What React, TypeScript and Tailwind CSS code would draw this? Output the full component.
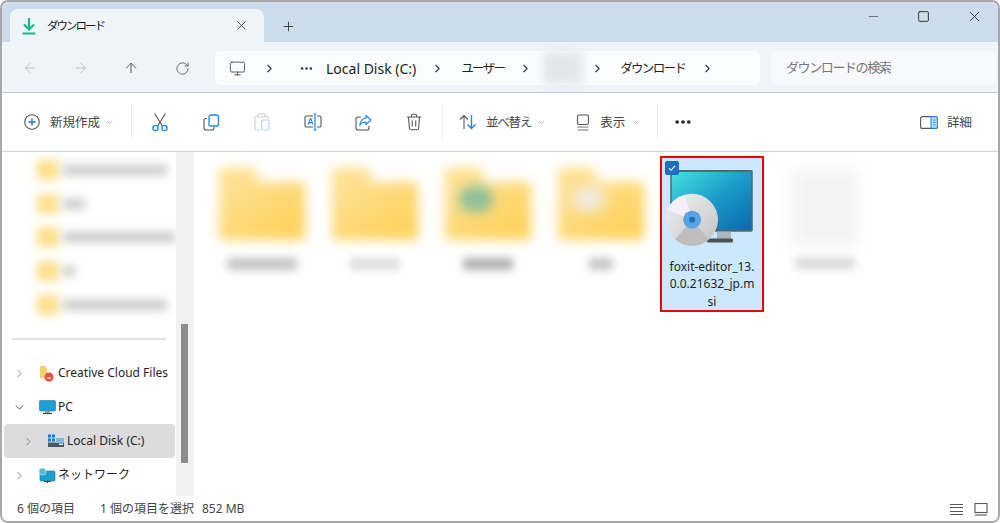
import React from "react";
import { ArrowLeft, ArrowRight, ArrowUp, RotateCw, Monitor, ChevronRight, ChevronDown, X, Plus, Minus, Square, Ellipsis } from "lucide-react";

function DownloadIcon() {
  return (
    <svg width="16" height="18" viewBox="0 0 16 18" fill="none" stroke="#1fb58f" strokeWidth="2.2">
      <path d="M8 1v10.5M3 7.5l5 5 5-5" />
      <path d="M1.5 16.5h13" />
    </svg>
  );
}
function NewIcon() {
  return (
    <svg width="18" height="18" viewBox="0 0 18 18" fill="none">
      <circle cx="9" cy="9" r="7.3" stroke="#555" strokeWidth="1.1" />
      <path d="M9 5.5v7M5.5 9h7" stroke="#1a73c8" strokeWidth="1.3" />
    </svg>
  );
}
function CutIcon() {
  return (
    <svg width="18" height="20" viewBox="0 0 18 20" fill="none">
      <path d="M3.5 1.5 L11.5 14M14.5 1.5 L6.5 14" stroke="#555" strokeWidth="1.1" />
      <circle cx="4.5" cy="16" r="2.6" stroke="#1e88e5" strokeWidth="1.4" />
      <circle cx="13.5" cy="16" r="2.6" stroke="#1e88e5" strokeWidth="1.4" />
    </svg>
  );
}
function CopyIcon() {
  return (
    <svg width="17" height="17" viewBox="0 0 17 17" fill="none">
      <path d="M4 4.5H3a2 2 0 0 0-2 2V14a2 2 0 0 0 2 2h6a2 2 0 0 0 2-2v-1" stroke="#555" strokeWidth="1.1" />
      <rect x="6" y="1" width="9.5" height="11" rx="2" stroke="#1e88e5" strokeWidth="1.3" />
    </svg>
  );
}
function PasteIcon() {
  return (
    <svg width="16" height="18" viewBox="0 0 16 18" fill="none">
      <path d="M4 3H2.5A1.5 1.5 0 0 0 1 4.5v11A1.5 1.5 0 0 0 2.5 17H6M11 3h1.5A1.5 1.5 0 0 1 14 4.5V6" stroke="#cfcfcf" strokeWidth="1.1" />
      <rect x="4" y="1" width="7" height="3" rx="1" stroke="#cfcfcf" strokeWidth="1.1" />
      <rect x="7.5" y="7" width="7.5" height="10" rx="1.5" stroke="#b7d6ee" strokeWidth="1.2" />
    </svg>
  );
}
function RenameIcon() {
  return (
    <svg width="18" height="18" viewBox="0 0 18 18" fill="none">
      <path d="M9 3H2.5A1.5 1.5 0 0 0 1 4.5v8A1.5 1.5 0 0 0 2.5 14H9M13 3h2.5A1.5 1.5 0 0 1 17 4.5v8a1.5 1.5 0 0 1-1.5 1.5H13" stroke="#555" strokeWidth="1.1" />
      <path d="M4 11.5L6.3 5.5h.4L9 11.5M4.8 9.6h3.4" stroke="#1e88e5" strokeWidth="1.1" />
      <path d="M11 1v16M9.5 1h3M9.5 17h3" stroke="#1e88e5" strokeWidth="1.2" />
    </svg>
  );
}
function ShareIcon() {
  return (
    <svg width="17" height="17" viewBox="0 0 17 17" fill="none">
      <path d="M6 3H3a2 2 0 0 0-2 2v9a2 2 0 0 0 2 2h9a2 2 0 0 0 2-2v-2" stroke="#555" strokeWidth="1.1" />
      <path d="M11 1.5L16 6l-5 4.5V8C8 8 6 9 4.8 11.5 5 7.5 7.5 4.5 11 4.2z" stroke="#1e88e5" strokeWidth="1.2" strokeLinejoin="round" />
    </svg>
  );
}
function TrashIcon() {
  return (
    <svg width="16" height="18" viewBox="0 0 16 18" fill="none" stroke="#555" strokeWidth="1.1">
      <path d="M1 4h14M5.5 4V2.6A1.3 1.3 0 0 1 6.8 1.3h2.4a1.3 1.3 0 0 1 1.3 1.3V4" />
      <path d="M2.5 4l.9 11.2A1.6 1.6 0 0 0 5 16.7h6a1.6 1.6 0 0 0 1.6-1.5L13.5 4" />
      <path d="M6.3 7.5v6M9.7 7.5v6" />
    </svg>
  );
}
function SortIcon() {
  return (
    <svg width="18" height="16" viewBox="0 0 18 16" fill="none">
      <path d="M5 15V1.5M1 5.5l4-4 4 4" stroke="#555" strokeWidth="1.1" />
      <path d="M12.5 1v13.5M8.5 10.5l4 4 4-4" stroke="#1e88e5" strokeWidth="1.4" />
    </svg>
  );
}
function ViewIcon() {
  return (
    <svg width="14" height="17" viewBox="0 0 14 17" fill="none" stroke="#555" strokeWidth="1.1">
      <rect x="1.5" y="1" width="11" height="9.5" rx="1.5" />
      <path d="M1.5 13h11M1.5 16h11" stroke="#777" />
    </svg>
  );
}
function DetailsIcon() {
  return (
    <svg width="18" height="13" viewBox="0 0 18 13" fill="none">
      <rect x="0.6" y="0.6" width="16.8" height="11.8" rx="2" stroke="#555" strokeWidth="1.1" />
      <path d="M11 0.6h4.4a2 2 0 0 1 2 2v7.8a2 2 0 0 1-2 2H11z" fill="#bfe0f7" stroke="#1e88e5" strokeWidth="1.1" />
      <path d="M13 4h2.5M13 6.5h2.5M13 9h2.5" stroke="#1e88e5" strokeWidth="0.9" />
    </svg>
  );
}
function MsiIcon() {
  return (
    <svg width="90" height="84" viewBox="0 0 90 84" className="mr-[4px]">
      <defs>
        <linearGradient id="scr" x1="0" y1="0" x2="1" y2="1">
          <stop offset="0" stopColor="#45e0e0" />
          <stop offset="0.5" stopColor="#1b9cc8" />
          <stop offset="1" stopColor="#0a68b0" />
        </linearGradient>
        <linearGradient id="dsk" x1="0" y1="0" x2="1" y2="1">
          <stop offset="0" stopColor="#f0f0f0" />
          <stop offset="1" stopColor="#c4c4c4" />
        </linearGradient>
      </defs>
      <rect x="5" y="1" width="83" height="62" rx="1.5" fill="#55666f" />
      <rect x="6.5" y="3" width="80" height="58" fill="url(#scr)" />
      <rect x="52" y="63" width="14" height="8" fill="#a9b7bf" />
      <rect x="42" y="70" width="26" height="4" rx="1" fill="#4b5258" />
      <circle cx="27" cy="51" r="26" fill="url(#dsk)" />
      <path d="M27 51L2 41a26 26 0 0 1 18-15z" fill="#f3eff4" />
      <path d="M27 51L10 71a26 26 0 0 0 34 0z" fill="#bdbdbd" />
      <circle cx="27" cy="51" r="9" fill="#5aa3e3" />
      <circle cx="27" cy="51" r="3" fill="#1c6fc0" />
    </svg>
  );
}
function FolderBlur({ tint }: { tint?: string }) {
  return (
    <div className="relative w-[86px] h-[72px] blur-[6px]">
      <div className="w-[38px] h-[16px] bg-[#fde08c] rounded-t" />
      <div className="h-[58px] -mt-[2px] rounded bg-gradient-to-br from-[#fde29a] via-[#fdd873] to-[#ffd050]" />
      {tint && <div className={`absolute left-[14px] top-[18px] w-[34px] h-[26px] rounded-full ${tint}`} />}
    </div>
  );
}
function GridItem({ tint, label }: { tint?: string; label: string }) {
  return (
    <div className="w-[104px] h-[156px] pt-[12px] pl-[4px] flex flex-col items-center shrink-0">
      <FolderBlur tint={tint} />
      <div className={`mt-[18px] h-[12px] blur-[4px] ${label}`} />
    </div>
  );
}
function BlurRow({ w }: { w: string }) {
  return (
    <div className="h-[33.7px] flex items-center pl-[35px]">
      <div className="w-[22px] h-[20px] bg-[#fde08c] blur-[5px] shrink-0" />
      <div className={`ml-[4px] h-[10px] bg-[#c8c8c8] blur-[5px] ${w}`} />
    </div>
  );
}
function TreeRow({ chev, icon, label, active, indent }: { chev: "r" | "d"; icon: React.ReactNode; label: string; active?: boolean; indent?: boolean }) {
  return (
    <div className={`h-[34px] ml-[2px] mr-[1px] flex items-center ${active ? "bg-[#dcdcdc] rounded-sm" : ""} ${indent ? "pl-[18px]" : "pl-[9px]"}`}>
      {chev === "r" ? <ChevronRight size={13} strokeWidth={1.5} className="text-[#707070] shrink-0" /> : <ChevronDown size={13} strokeWidth={1.8} className="text-[#444] shrink-0" />}
      <span className="w-[20px] ml-[11px] flex justify-center shrink-0">{icon}</span>
      <span className="ml-[1px] text-[12px] text-[#1f1f1f] whitespace-nowrap">{label}</span>
    </div>
  );
}
function Crumb() {
  return <ChevronRight size={13} strokeWidth={2} className="text-[#333] shrink-0" />;
}
function Sep() {
  return <div className="w-px h-[36px] bg-[#ececec] shrink-0" />;
}

export default function App() {
  return (
    <div className="w-[1000px] h-[523px] bg-white overflow-hidden font-['Noto_Sans','Noto_Sans_CJK_JP',sans-serif]">
      <div className="w-full h-full flex flex-col border-2 border-[#a8a8a8] rounded-[8px] overflow-hidden">
        {/* tab strip */}
        <div className="h-[40px] shrink-0 bg-[#cddcea] flex items-end pl-[8px] relative">
          <div className="w-[254px] h-[33px] bg-[#eff4f9] rounded-t-[8px] flex items-center pl-[11px] pr-[15px]">
            <DownloadIcon />
            <span className="ml-[10px] text-[11.5px] tracking-[-2px] text-[#1a1a1a]">ダウンロード</span>
            <X size={15} strokeWidth={1.3} className="ml-auto text-[#333]" />
          </div>
          <Plus size={15} strokeWidth={1.4} className="ml-[17px] mb-[8px] text-[#333]" />
          <div className="ml-auto flex items-center gap-[36px] pr-[15px] self-start pt-[6px]">
            <Minus size={15} strokeWidth={1.1} className="text-[#444]" />
            <Square size={13} strokeWidth={1.6} className="text-[#222]" />
            <X size={17} strokeWidth={1.2} className="text-[#222]" />
          </div>
        </div>
        {/* address */}
        <div className="h-[51px] shrink-0 bg-[#eff4f9] border-b border-[#bccad8] pt-[2px] flex items-center">
          <div className="w-[213px] flex items-center shrink-0">
            <ArrowLeft size={16} strokeWidth={1.1} className="ml-[20px] text-[#aab0b5]" />
            <ArrowRight size={16} strokeWidth={1.1} className="ml-[35px] text-[#aab0b5]" />
            <ArrowUp size={16} strokeWidth={1.2} className="ml-[34px] text-[#333]" />
            <RotateCw size={15} strokeWidth={1.2} className="ml-[36px] text-[#444]" />
          </div>
          <div className="w-[545px] h-[34px] bg-[#fbfcfe] rounded-[5px] flex items-center shrink-0 text-[14px] text-[#222]">
            <Monitor size={17} strokeWidth={1.1} className="ml-[14px] text-[#333]" />
            <span className="ml-[17px]"><Crumb /></span>
            <Ellipsis size={15} strokeWidth={2} className="ml-[23px] text-[#333]" />
            <span className="ml-[12px] whitespace-nowrap">Local Disk (C:)</span>
            <span className="ml-[15px]"><Crumb /></span>
            <span className="ml-[17px] mt-[3px] text-[12.5px] tracking-[-1.7px] whitespace-nowrap">ユーザー</span>
            <span className="ml-[15px]"><Crumb /></span>
            <div className="ml-[11px] w-[40px] h-[34px] bg-[#e4e6e9] blur-[5px]" />
            <span className="ml-[8px]"><Crumb /></span>
            <span className="ml-[16px] mt-[3px] text-[12.5px] tracking-[-1.7px] whitespace-nowrap">ダウンロード</span>
            <span className="ml-[16px]"><Crumb /></span>
          </div>
          <div className="ml-[11px] w-[225px] h-[34px] bg-[#f7f9fc] rounded-[5px] flex items-center pl-[15px] text-[13px] tracking-[-1.4px] text-[#777]">
            ダウンロードの検索
          </div>
        </div>
        {/* toolbar */}
        <div className="h-[59px] shrink-0 bg-white border-b border-[#c8d4e0] flex items-center text-[12.5px] text-[#444]">
          <span className="ml-[21px]"><NewIcon /></span>
          <span className="ml-[9px] mt-[2px] whitespace-nowrap">新規作成</span>
          <ChevronDown size={9} className="ml-[5px] text-[#999]" />
          <div className="ml-[17px]"><Sep /></div>
          <span className="ml-[19px]"><CutIcon /></span>
          <span className="ml-[34px]"><CopyIcon /></span>
          <span className="ml-[34px]"><PasteIcon /></span>
          <span className="ml-[34px]"><RenameIcon /></span>
          <span className="ml-[33px]"><ShareIcon /></span>
          <span className="ml-[34px]"><TrashIcon /></span>
          <div className="ml-[20px]"><Sep /></div>
          <span className="ml-[16px]"><SortIcon /></span>
          <span className="ml-[9px] mt-[2px] tracking-[-1.2px] whitespace-nowrap">並べ替え</span>
          <ChevronDown size={9} className="ml-[6px] text-[#999]" />
          <span className="ml-[30px]"><ViewIcon /></span>
          <span className="ml-[10px] mt-[2px] whitespace-nowrap">表示</span>
          <ChevronDown size={9} className="ml-[6px] text-[#999]" />
          <div className="ml-[17px]"><Sep /></div>
          <Ellipsis size={20} strokeWidth={2.4} className="ml-[15px] text-[#222]" />
          <span className="ml-auto"><DetailsIcon /></span>
          <span className="ml-[9px] mr-[26px] mt-[2px] whitespace-nowrap">詳細</span>
        </div>
        {/* body */}
        <div className="flex-1 min-h-0 flex">
          <div className="w-[174px] shrink-0 overflow-hidden">
            <div className="pt-[1px]">
              <BlurRow w="w-[104px]" />
              <BlurRow w="w-[22px]" />
              <BlurRow w="w-[116px]" />
              <BlurRow w="w-[12px]" />
              <BlurRow w="w-[104px]" />
            </div>
            <div className="mx-[10px] mt-[17px] h-[2px] bg-[#e2e2e2]" />
            <div className="mt-[16px]">
              <TreeRow chev="r" label="Creative Cloud Files" icon={
                <svg width="16" height="17" viewBox="0 0 16 17"><path d="M1 1h5l2 3v9H1z" fill="#f6cd6a" /><circle cx="10" cy="12" r="4.5" fill="#e0533d" /><path d="M8 13h4" stroke="#fff" strokeWidth="1" /></svg>
              } />
              <TreeRow chev="d" label="PC" icon={
                <svg width="17" height="15" viewBox="0 0 17 15"><rect x="0.5" y="0.5" width="16" height="10.5" rx="1" fill="#1d9fd8" stroke="#2f6f92" strokeWidth="0.6" /><path d="M6 11h5v2H6z" fill="#8aa" /><path d="M4 13.5h9" stroke="#444" strokeWidth="1.2" /></svg>
              } />
              <TreeRow chev="r" indent active label="Local Disk (C:)" icon={
                <svg width="18" height="14" viewBox="0 0 18 14"><rect x="1" y="0.5" width="3" height="3" fill="#1976d2" /><rect x="5" y="0.5" width="3" height="3" fill="#1976d2" /><rect x="1" y="4.5" width="3" height="3" fill="#1976d2" /><rect x="5" y="4.5" width="3" height="3" fill="#1976d2" /><rect x="1" y="8.5" width="16" height="4.5" fill="#4a5a62" /><rect x="9" y="4" width="8" height="5" fill="#7db7e0" /><rect x="12" y="9.5" width="4" height="1.5" fill="#d9e7ef" /></svg>
              } />
              <TreeRow chev="r" label="ネットワーク" icon={
                <svg width="18" height="17" viewBox="0 0 18 17"><rect x="2" y="4" width="15" height="10" rx="1" fill="#1da0cf" stroke="#2a6c8c" strokeWidth="0.6" /><circle cx="4.5" cy="4.5" r="3.6" fill="#5cb3dd" stroke="#e5f3fa" strokeWidth="0.6" /><path d="M6 14.5h7M9.5 14v2" stroke="#444" strokeWidth="1.2" /></svg>
              } />
            </div>
          </div>
          <div className="w-[17px] shrink-0 bg-[#f1f1f1] pt-[172px] flex justify-center">
            <div className="w-[7px] h-[139px] bg-[#8c8c8c]" />
          </div>
          <div className="flex-1 min-w-0 border-l border-[#f6f6f6] pl-[14px] pt-[4px] flex items-start gap-[9px] bg-white">
            <GridItem label="w-[70px] bg-[#c4c4c4]" />
            <GridItem label="w-[50px] bg-[#dddddd]" />
            <GridItem tint="bg-[#8fc09a]" label="w-[50px] bg-[#b0b0b0]" />
            <GridItem tint="bg-[#f2e9d8]" label="w-[24px] bg-[#c4c4c4]" />
            <div className="relative w-[104px] h-[156px] shrink-0 border-2 border-[#f00000] bg-[#cce8ff] flex flex-col items-center pt-[11px]">
              <div className="absolute left-[3px] top-[3px] w-[14px] h-[14px] rounded-[2px] bg-[#1e6fc0] flex items-center justify-center">
                <svg width="10" height="10" viewBox="0 0 10 10" fill="none" stroke="#fff" strokeWidth="1.1"><path d="M2 5.3l2 2 4-4.5" /></svg>
              </div>
              <MsiIcon />
              <div className="mt-[5px] w-[88px] text-center text-[12px] leading-[17.5px] text-[#1f1f1f] break-all">foxit-editor_13.0.0.21632_jp.msi</div>
            </div>
            <div className="w-[104px] h-[156px] shrink-0 pt-[14px] flex flex-col items-center">
              <div className="w-[66px] h-[76px] bg-[#f3f3f3] blur-[7px]" />
              <div className="mt-[12px] w-[60px] h-[11px] bg-[#d8d8d8] blur-[4px]" />
            </div>
          </div>
        </div>
        {/* status */}
        <div className="h-[25px] shrink-0 pt-[1px] bg-white flex items-center text-[12px] text-[#444]">
          <span className="ml-[15px] whitespace-nowrap">6 個の項目</span>
          <span className="ml-[25px] whitespace-nowrap">1 個の項目を選択</span>
          <span className="ml-[8px] whitespace-nowrap">852 MB</span>
          <div className="ml-auto mr-[10px] flex items-center gap-[10px]">
            <svg width="15" height="13" viewBox="0 0 15 13" stroke="#555" strokeWidth="1.1"><path d="M1 1.5h13M1 4.5h13M1 8.5h13M1 11.5h13" /></svg>
            <svg width="14" height="13" viewBox="0 0 14 13" fill="none" stroke="#555" strokeWidth="1.1"><rect x="1" y="0.5" width="12" height="9" /><path d="M1 12h12" /></svg>
          </div>
        </div>
      </div>
    </div>
  );
}
